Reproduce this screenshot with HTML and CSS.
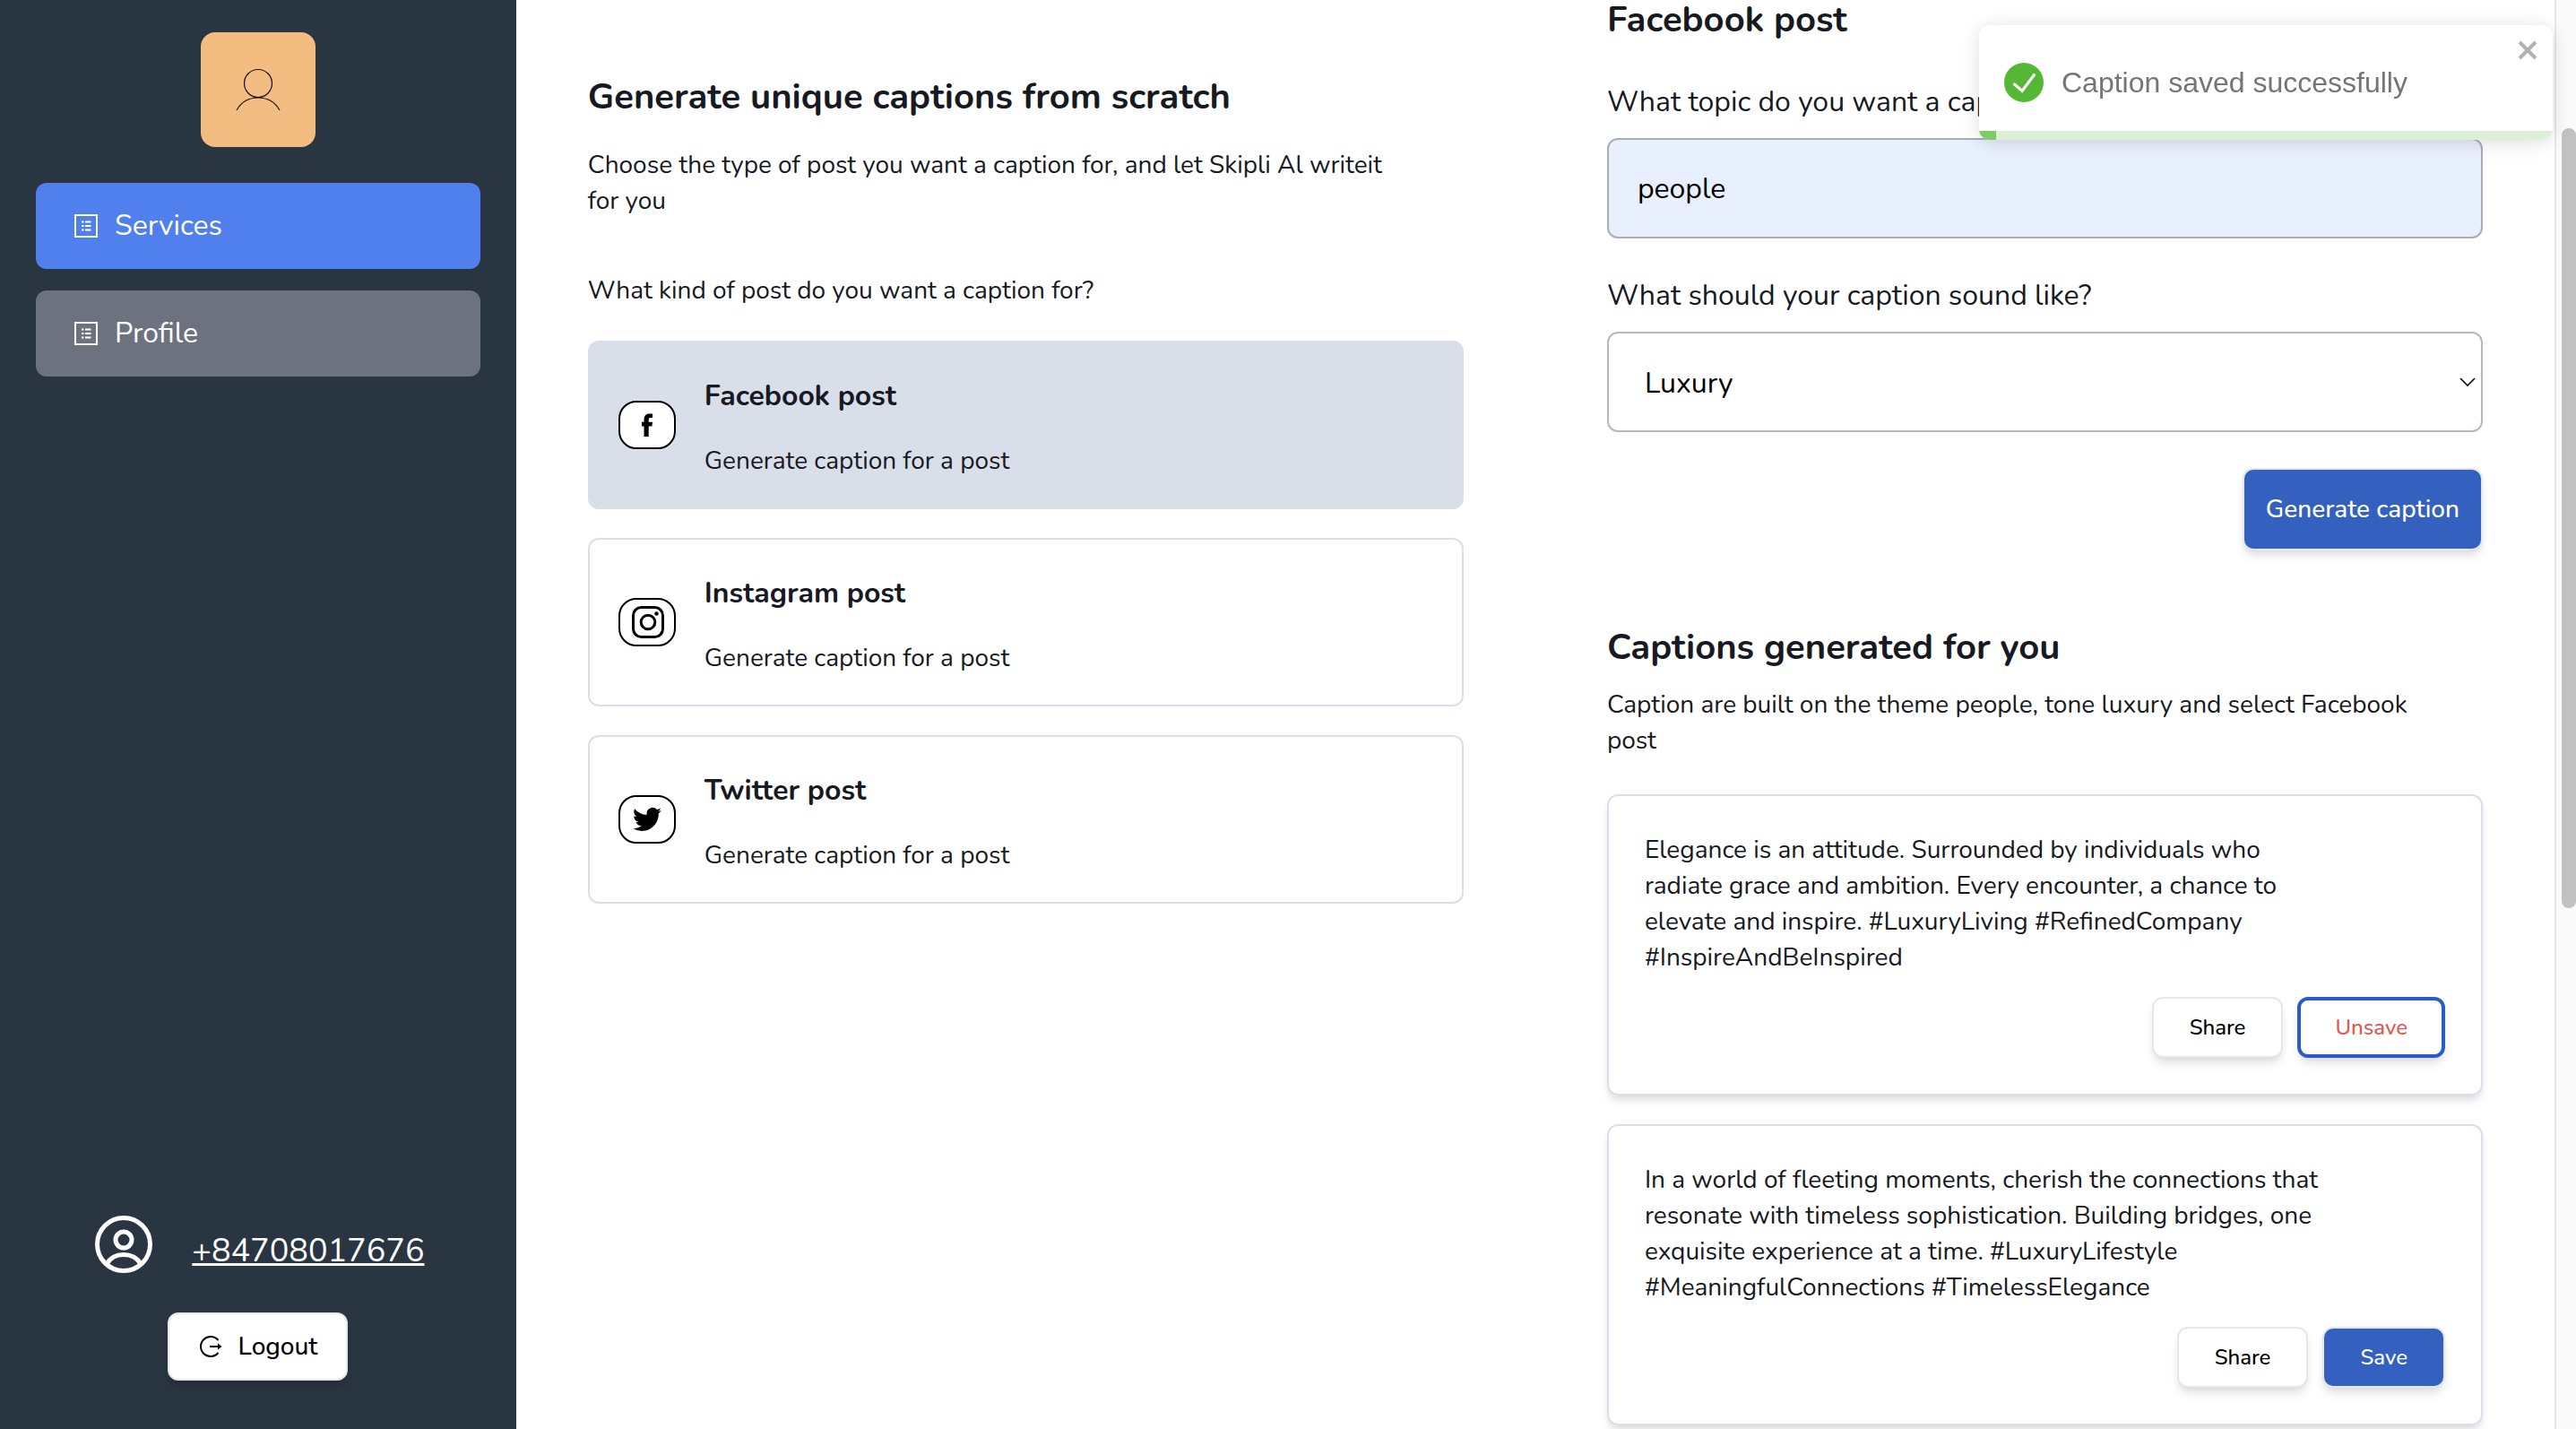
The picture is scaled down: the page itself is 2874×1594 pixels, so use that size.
FILE: index.html
```html
<!DOCTYPE html>
<html lang="en">
<head>
  <meta charset="utf-8">
  <title>Services</title>
  <link rel="stylesheet" href="styles.css">
</head>
<body>
  <div class="app">
    <aside class="sidebar">
      <div class="avatar">
        <svg width="56" height="56" viewBox="0 0 56 56" fill="none" stroke="#111" stroke-width="1.2" aria-hidden="true">
          <circle cx="28" cy="21" r="15.5"/>
          <path d="M4 51C9 42 18 37 28 37s19 5 24 14"/>
        </svg>
      </div>
      <nav class="nav">
        <a class="nav-link nav-link-active" href="#services">
          <svg width="32" height="32" viewBox="0 0 32 32" aria-hidden="true">
            <rect x="4" y="4" width="24" height="24" fill="none" stroke="#fff" stroke-width="2"/>
            <path d="M11 11.500h2.500M11 16h2.500M11 20.500h2.500M15 11.500h6.500M15 16h6.500M15 20.500h6.500" stroke="#fff" stroke-width="2"/>
          </svg>
          Services
        </a>
        <a class="nav-link" href="#profile">
          <svg width="32" height="32" viewBox="0 0 32 32" aria-hidden="true">
            <rect x="4" y="4" width="24" height="24" fill="none" stroke="#fff" stroke-width="2"/>
            <path d="M11 11.500h2.500M11 16h2.500M11 20.500h2.500M15 11.500h6.500M15 16h6.500M15 20.500h6.500" stroke="#fff" stroke-width="2"/>
          </svg>
          Profile
        </a>
      </nav>
      <div class="account">
        <div class="account-user">
          <svg width="72" height="72" viewBox="0 0 72 72" fill="none" stroke="#fff" stroke-width="5" aria-hidden="true">
            <circle cx="36" cy="36" r="29.500"/>
            <circle cx="36" cy="31" r="9"/>
            <path d="M17 58C21 51 28 47.500 36 47.500S51 51 55 58"/>
          </svg>
          <a class="account-phone" href="tel:+84708017676">+84708017676</a>
        </div>
        <button class="btn btn-logout" type="button">
          <svg width="28" height="28" viewBox="0 0 28 28" fill="none" stroke="#000" stroke-width="2" aria-hidden="true">
            <path d="M22.500 7A11 11 0 1 0 22.500 21M13 14h10"/>
            <path d="M22 10.500 26.500 14 22 17.500z" fill="#000" stroke="none"/>
          </svg>
          Logout
        </button>
      </div>
    </aside>

    <main class="content">
      <section class="panel panel-types">
        <h1 class="title title-main">Generate unique captions from scratch</h1>
        <p class="text intro">Choose the type of post you want a caption for, and let Skipli Al writeit for you</p>
        <p class="text question">What kind of post do you want a caption for?</p>
        <div class="types">
          <button class="type type-selected" type="button">
            <span class="type-icon">
              <svg width="40" height="40" viewBox="0 0 40 40" aria-hidden="true"><path d="M16.500 33V21.500H14v-4.700h2.500v-2.500C16.500 10 18.500 7.500 22.500 7.500H26v4.600h-2.300c-1.600 0-2 .7-2 2v2.700H26l-.6 4.700h-3.700V33z"/></svg>
            </span>
            <span class="type-body">
              <span class="type-name">Facebook post</span>
              <span class="text">Generate caption for a post</span>
            </span>
          </button>
          <button class="type" type="button">
            <span class="type-icon">
              <svg width="40" height="40" viewBox="0 0 40 40" fill="none" stroke="#000" aria-hidden="true">
                <rect x="4.500" y="3.500" width="33" height="33" rx="9" stroke-width="3"/>
                <circle cx="21" cy="20" r="7.800" stroke-width="3"/>
                <circle cx="30.500" cy="10.500" r="2.200" fill="#000" stroke="none"/>
              </svg>
            </span>
            <span class="type-body">
              <span class="type-name">Instagram post</span>
              <span class="text">Generate caption for a post</span>
            </span>
          </button>
          <button class="type" type="button">
            <span class="type-icon">
              <svg width="32" height="32" viewBox="0 0 24 24" aria-hidden="true"><path d="M23.950 4.570a10 10 0 0 1-2.820.770 4.960 4.960 0 0 0 2.160-2.720c-.950.550-2 .950-3.130 1.180a4.920 4.920 0 0 0-8.380 4.480C7.690 8.090 4.070 6.130 1.640 3.160a4.920 4.920 0 0 0 1.520 6.570 4.900 4.900 0 0 1-2.230-.610v.060a4.920 4.920 0 0 0 3.950 4.830 5 5 0 0 1-2.210.080 4.940 4.940 0 0 0 4.600 3.420A9.870 9.870 0 0 1 0 19.540a13.990 13.990 0 0 0 7.550 2.210c9.050 0 14-7.500 14-13.980 0-.210 0-.420-.010-.630a9.940 9.940 0 0 0 2.460-2.550z"/></svg>
            </span>
            <span class="type-body">
              <span class="type-name">Twitter post</span>
              <span class="text">Generate caption for a post</span>
            </span>
          </button>
        </div>
      </section>

      <section class="panel panel-form">
        <form class="form">
          <h2 class="title">Facebook post</h2>
          <div class="field">
            <label class="label" for="topic">What topic do you want a caption for?</label>
            <input class="control control-filled" id="topic" type="text" value="people">
          </div>
          <div class="field">
            <label class="label" for="tone">What should your caption sound like?</label>
            <div class="select-wrap">
              <select class="control control-select" id="tone">
                <option selected>Luxury</option>
              </select>
              <svg class="chevron" width="20" height="20" viewBox="0 0 20 20" fill="none" stroke="#111" stroke-width="1.7" aria-hidden="true"><path d="M2 6l8 8 8-8"/></svg>
            </div>
          </div>
          <button class="btn btn-primary btn-generate" type="button">Generate caption</button>
        </form>

        <h2 class="title title-results">Captions generated for you</h2>
        <p class="text results-text">Caption are built on the theme people, tone luxury and select Facebook post</p>
        <div class="captions">
          <article class="caption">
            <p class="text caption-text">Elegance is an attitude. Surrounded by individuals who radiate grace and ambition. Every encounter, a chance to elevate and inspire. #LuxuryLiving #RefinedCompany #InspireAndBeInspired</p>
            <div class="caption-actions">
              <button class="btn btn-small" type="button">Share</button>
              <button class="btn btn-small btn-unsave" type="button">Unsave</button>
            </div>
          </article>
          <article class="caption">
            <p class="text caption-text">In a world of fleeting moments, cherish the connections that resonate with timeless sophistication. Building bridges, one exquisite experience at a time. #LuxuryLifestyle #MeaningfulConnections #TimelessElegance</p>
            <div class="caption-actions">
              <button class="btn btn-small" type="button">Share</button>
              <button class="btn btn-small btn-primary" type="button">Save</button>
            </div>
          </article>
        </div>
      </section>
    </main>

    <div class="scrollbar" aria-hidden="true"><div class="scrollbar-thumb"></div></div>
  </div>

  <div class="toast" role="alert">
    <div class="toast-body">
      <svg width="44" height="44" viewBox="0 0 44 44" aria-hidden="true">
        <circle cx="22" cy="22" r="22" fill="#54b835"/>
        <path d="M11.500 24l8.500 7.500L33.500 13.500" fill="none" stroke="#fff" stroke-width="3.200" stroke-linecap="round"/>
      </svg>
      <span>Caption saved successfully</span>
    </div>
    <button class="toast-close" type="button" aria-label="close">
      <svg width="24" height="24" viewBox="0 0 24 24" fill="none" stroke="#b3b3b3" stroke-width="4" aria-hidden="true"><path d="M3 3l18 18M21 3L3 21"/></svg>
    </button>
    <div class="toast-progress"><div class="toast-progress-bar"></div></div>
  </div>
</body>
</html>
```
FILE: styles.css
```css
* {
  box-sizing: border-box;
}

body {
  margin: 0;
  background: #fff;
  color: #171923;
  font-family: Nunito, Lato, sans-serif;
  font-size: 28px;
  line-height: 40px;
}

h1, h2, p {
  margin: 0;
}

button, input, select {
  font-family: inherit;
}

svg {
  display: block;
  flex: none;
}

.app {
  display: flex;
  height: 100vh;
  overflow: hidden;
}

/* Sidebar */

.sidebar {
  display: flex;
  flex-direction: column;
  flex: none;
  width: calc(20vw + 1px);
  padding: 36px 40px 54px;
  background: #293541;
}

.avatar {
  display: flex;
  align-items: center;
  justify-content: center;
  align-self: center;
  width: 128px;
  height: 128px;
  border-radius: 16px;
  background: #f3bc80;
}

.nav {
  display: flex;
  flex-direction: column;
  gap: 24px;
  margin-top: 40px;
}

.nav-link {
  display: flex;
  align-items: center;
  gap: 16px;
  padding: 24px 40px;
  border-radius: 12px;
  background: #6c727f;
  color: #fff;
  font-size: 32px;
  line-height: 48px;
  text-decoration: none;
}

.nav-link-active {
  background: #4f80ee;
}

.account {
  display: flex;
  flex-direction: column;
  align-items: center;
  gap: 40px;
  margin-top: auto;
}

.account-user {
  display: flex;
  align-items: flex-end;
  gap: 40px;
}

.account-phone {
  color: #fff;
  font-size: 36px;
  line-height: 56px;
}

/* Buttons */

.btn {
  display: flex;
  align-items: center;
  justify-content: center;
  border: 2px solid #e5e7eb;
  border-radius: 12px;
  background: #fff;
  box-shadow: 0 8px 12px -2px rgba(0, 0, 0, 0.1), 0 4px 8px -4px rgba(0, 0, 0, 0.1);
  color: #000;
  font-size: 28px;
  font-weight: 500;
  line-height: 40px;
}

.btn-logout {
  gap: 16px;
  padding: 16px 32px;
}

.btn-primary {
  background: #3461bf;
  color: #fff;
}

.btn-generate {
  align-self: flex-end;
  padding: 24px;
}

.btn-small {
  padding: 16px 40px;
  font-size: 24px;
  line-height: 32px;
}

.btn-unsave {
  padding: 14px 38px;
  border: 4px solid #285cc8;
  color: #e25650;
}

/* Content */

.content {
  display: grid;
  grid-template-columns: 1fr 1fr;
  flex: 1;
  overflow: hidden;
}

.panel {
  min-width: 0;
  padding: 0 80px;
}

.panel-types {
  padding-top: 80px;
}

.panel-form {
  padding-top: 2px;
}

.title {
  font-size: 40px;
  font-weight: 700;
  line-height: 40px;
}

.title-main {
  line-height: 56px;
}

.text {
  font-size: 28px;
  line-height: 40px;
}

.intro {
  max-width: 920px;
  margin-top: 28px;
}

.question {
  margin-top: 60px;
}

.types {
  display: flex;
  flex-direction: column;
  gap: 32px;
  margin-top: 36px;
}

.type {
  display: flex;
  align-items: center;
  gap: 32px;
  padding: 32px;
  border: 2px solid #d9dfea;
  border-radius: 12px;
  background: #fff;
  color: #171923;
  text-align: left;
}

.type-selected {
  background: #d9dfe9;
}

.type-icon {
  display: flex;
  align-items: center;
  justify-content: center;
  width: 64px;
  height: 54px;
  border: 2px solid #000;
  border-radius: 20px;
  background: #fff;
}

.type-body {
  display: flex;
  flex-direction: column;
  gap: 28px;
  padding-top: 4px;
}

.type-name {
  font-size: 32px;
  font-weight: 700;
  line-height: 48px;
}

/* Form */

.form {
  display: flex;
  flex-direction: column;
  gap: 40px;
}

.form .title {
  margin-bottom: 8px;
}

.field {
  display: flex;
  flex-direction: column;
  gap: 16px;
}

.label {
  font-size: 32px;
  line-height: 48px;
}

.control {
  width: 100%;
  height: 112px;
  padding: 0 32px;
  border: 2px solid #b8b8b8;
  border-radius: 12px;
  background: #fff;
  color: #000;
  font-size: 32px;
}

.control-filled {
  border-color: #a9adb9;
  background: #e8effd;
}

.control-select {
  grid-area: 1 / 1;
  padding: 2px 40px 0;
  appearance: none;
}

.select-wrap {
  display: grid;
  align-items: center;
}

.chevron {
  grid-area: 1 / 1;
  justify-self: end;
  margin-right: 7px;
  pointer-events: none;
}

/* Results */

.title-results {
  margin-top: 88px;
}

.results-text {
  max-width: 920px;
  margin-top: 24px;
}

.captions {
  display: flex;
  flex-direction: column;
  gap: 32px;
  margin-top: 40px;
}

.caption {
  padding: 40px;
  border: 2px solid #d9dfea;
  border-radius: 12px;
  box-shadow: 0 8px 12px -2px rgba(0, 0, 0, 0.1), 0 4px 8px -4px rgba(0, 0, 0, 0.1);
}

.caption-text {
  max-width: 780px;
}

.caption-actions {
  display: flex;
  justify-content: flex-end;
  gap: 16px;
  margin-top: 24px;
}

/* Scrollbar */

.scrollbar {
  display: grid;
  grid-template-rows: 143fr 870fr 581fr;
  flex: none;
  width: 24px;
  padding-left: 6px;
  border-left: 2px solid #e8e8e8;
  background: #fafafa;
}

.scrollbar-thumb {
  grid-row: 2;
  border-radius: 8px;
  background: #c1c1c1;
}

/* Toast */

.toast {
  position: fixed;
  top: 28px;
  right: 26px;
  width: 640px;
  overflow: hidden;
  border-radius: 12px;
  background: #fff;
  color: #757575;
  font-family: "Liberation Sans", Arial, sans-serif;
  font-size: 32px;
  box-shadow: 0 2px 20px rgba(0, 0, 0, 0.1), 0 4px 30px rgba(0, 0, 0, 0.05);
}

.toast-body {
  display: flex;
  align-items: center;
  gap: 20px;
  min-height: 118px;
  padding: 10px 28px 0;
}

.toast-close {
  position: absolute;
  top: 16px;
  right: 16px;
  padding: 0;
  border: 0;
  background: none;
}

.toast-progress {
  height: 10px;
  background: #dcf0d6;
}

.toast-progress-bar {
  width: 3%;
  height: 10px;
  background: #7fcb68;
}
```
